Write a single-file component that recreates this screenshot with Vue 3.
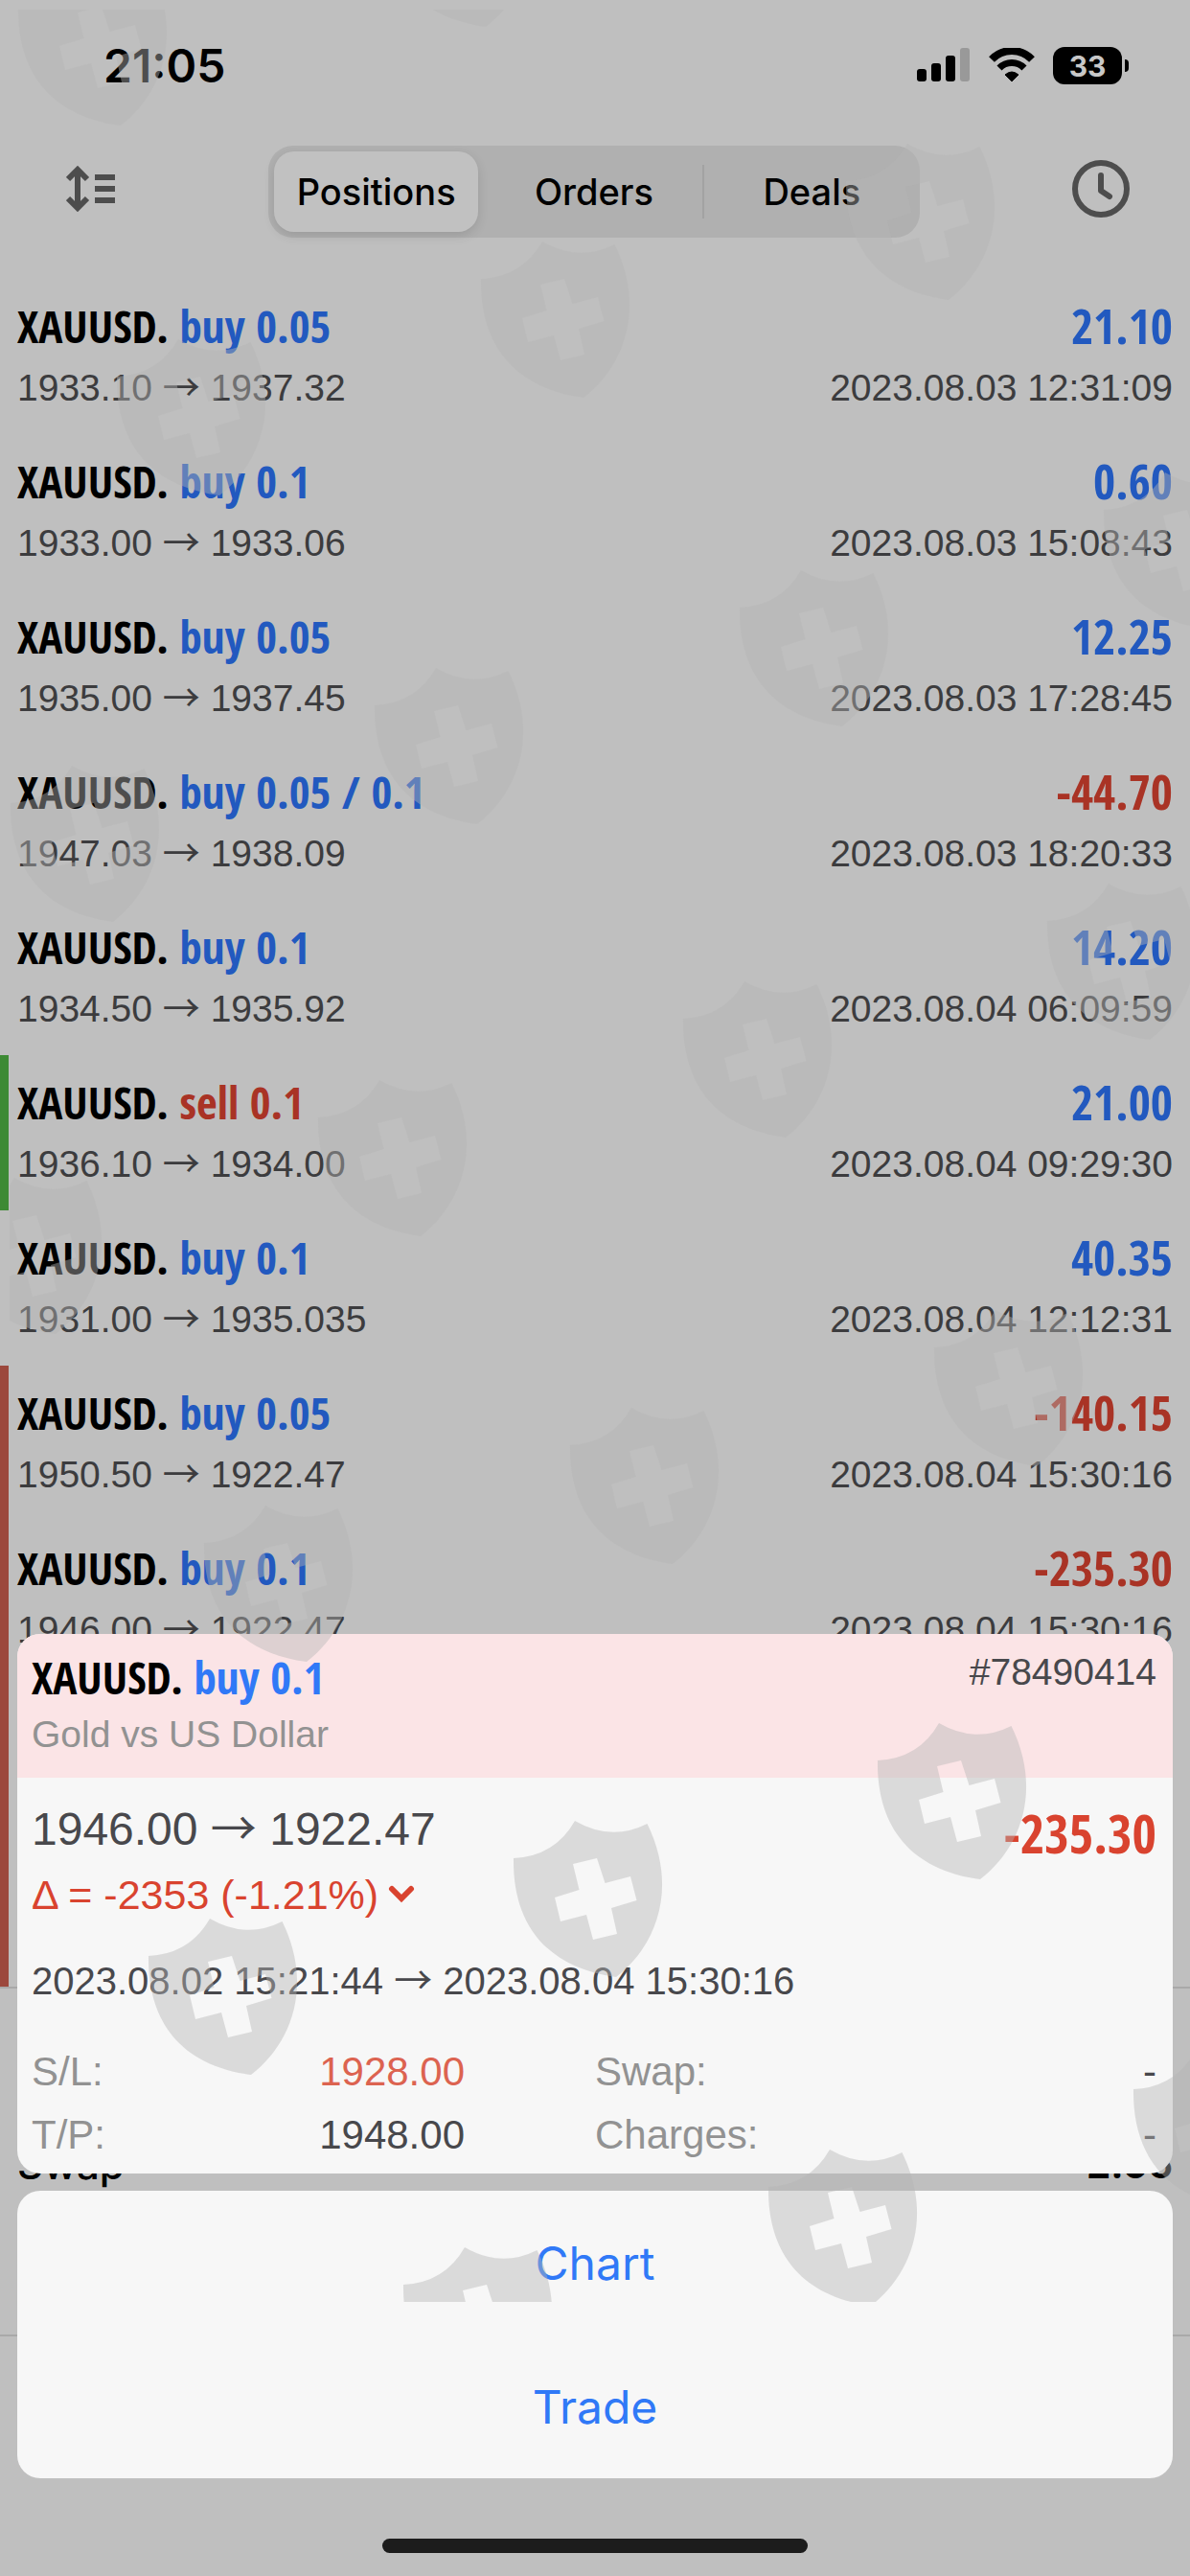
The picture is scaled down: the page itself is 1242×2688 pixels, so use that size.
<template>
    <div class="screen">
        <header class="status-bar">
            <span class="time">21:05</span>
            <div class="status-icons">
                <svg class="signal" width="56" height="36" viewBox="0 0 56 36" aria-hidden="true">
                    <rect x="0" y="22" width="10" height="13" rx="3" fill="#000" />
                    <rect x="15" y="16" width="10" height="19" rx="3" fill="#000" />
                    <rect x="30" y="8" width="10" height="27" rx="3" fill="#000" />
                    <rect x="45" y="0" width="10" height="35" rx="3" fill="#999" />
                </svg>
                <svg class="wifi" width="48" height="36" viewBox="0 0 48 36" aria-hidden="true">
                    <path d="M3 12 A29 29 0 0 1 45 12" fill="none" stroke="#000" stroke-width="8" />
                    <path d="M11 21 A18 18 0 0 1 37 21" fill="none" stroke="#000" stroke-width="7" />
                    <path d="M24 35 L17 28 Q24 22 31 28 Z" fill="#000" stroke="#000" stroke-linejoin="round" />
                </svg>
                <div class="battery"><span>33</span></div>
            </div>
        </header>

        <nav class="toolbar">
            <button class="icon-button" type="button" aria-label="Sort">
                <svg width="52" height="48" viewBox="0 0 52 48" fill="none" stroke="#4d4d4d" stroke-width="6">
                    <path d="M12 4 V44 M2 14 L12 4 L22 14 M2 34 L12 44 L22 34" />
                    <path d="M30 12 H51 M30 24 H51 M30 36 H51" />
                </svg>
            </button>
            <div class="segments">
                <button
                    v-for="tab in tabs"
                    :key="tab"
                    type="button"
                    class="segment"
                    :class="{ active: tab === activeTab }"
                    @click="activeTab = tab"
                >{{ tab }}</button>
            </div>
            <button class="icon-button" type="button" aria-label="History">
                <svg width="60" height="60" viewBox="0 0 60 60" fill="none" stroke="#4d4d4d" stroke-width="6">
                    <circle cx="30" cy="30" r="27" />
                    <path d="M30 16 V32 L39 38" stroke-linecap="round" stroke-linejoin="round" />
                </svg>
            </button>
        </nav>

        <ul class="positions">
            <li v-for="(p, i) in positions" :key="i" class="position" :class="p.mark">
                <div class="line title">
                    <span>XAUUSD. <span :class="p.side">{{ p.side }} {{ p.volume }}</span></span>
                    <span class="amount" :class="p.profit.startsWith('-') ? 'loss' : 'gain'">{{ p.profit }}</span>
                </div>
                <div class="line detail">
                    <span>{{ p.open }} <span class="arrow">→</span> {{ p.current }}</span>
                    <span>{{ p.time }}</span>
                </div>
            </li>
        </ul>

        <section class="summary">
            <span>Swap</span>
            <span class="summary-value">2.05</span>
        </section>

        <div class="sheet">
            <section class="card">
                <div class="card-head">
                    <div>
                        <div class="title">XAUUSD. <span class="buy">buy 0.1</span></div>
                        <div class="muted">Gold vs US Dollar</div>
                    </div>
                    <span class="ticket">#78490414</span>
                </div>
                <div class="card-body">
                    <div class="line">
                        <span class="price">1946.00 <span class="arrow">→</span> 1922.47</span>
                        <span class="profit">-235.30</span>
                    </div>
                    <div class="delta">
                        <span>Δ = -2353 (-1.21%)</span>
                        <svg width="28" height="20" viewBox="0 0 28 20" fill="none" stroke="#d9432f" stroke-width="6">
                            <path d="M4 4 L14 14 L24 4" stroke-linecap="round" />
                        </svg>
                    </div>
                    <div class="dates">2023.08.02 15:21:44 <span class="arrow">→</span> 2023.08.04 15:30:16</div>
                    <dl class="facts">
                        <div class="fact"><dt>S/L:</dt><dd class="stop">1928.00</dd></div>
                        <div class="fact"><dt>Swap:</dt><dd>-</dd></div>
                        <div class="fact"><dt>T/P:</dt><dd>1948.00</dd></div>
                        <div class="fact"><dt>Charges:</dt><dd>-</dd></div>
                    </dl>
                </div>
            </section>
            <section class="card actions">
                <button type="button">Chart</button>
                <button type="button">Trade</button>
            </section>
            <div class="home-indicator"></div>
        </div>

        <svg class="watermark" viewBox="0 0 1242 2688" preserveAspectRatio="xMidYMin meet" aria-hidden="true">
            <defs>
                <clipPath id="mark-area"><rect x="10" y="10" width="1232" height="2392" /></clipPath>
            </defs>
            <g clip-path="url(#mark-area)">
                <path v-for="(s, i) in shields" :key="i" :d="shieldPath" :transform="`translate(${s[0]} ${s[1]})`" />
            </g>
        </svg>
    </div>
</template>

<script setup>
import { ref } from 'vue';

const tabs = ['Positions', 'Orders', 'Deals'];
const activeTab = ref('Positions');

const positions = [
    { side: 'buy', volume: '0.05', profit: '21.10', open: '1933.10', current: '1937.32', time: '2023.08.03 12:31:09' },
    { side: 'buy', volume: '0.1', profit: '0.60', open: '1933.00', current: '1933.06', time: '2023.08.03 15:08:43' },
    { side: 'buy', volume: '0.05', profit: '12.25', open: '1935.00', current: '1937.45', time: '2023.08.03 17:28:45' },
    { side: 'buy', volume: '0.05 / 0.1', profit: '-44.70', open: '1947.03', current: '1938.09', time: '2023.08.03 18:20:33' },
    { side: 'buy', volume: '0.1', profit: '14.20', open: '1934.50', current: '1935.92', time: '2023.08.04 06:09:59' },
    { side: 'sell', volume: '0.1', profit: '21.00', open: '1936.10', current: '1934.00', time: '2023.08.04 09:29:30', mark: 'near-profit' },
    { side: 'buy', volume: '0.1', profit: '40.35', open: '1931.00', current: '1935.035', time: '2023.08.04 12:12:31' },
    { side: 'buy', volume: '0.05', profit: '-140.15', open: '1950.50', current: '1922.47', time: '2023.08.04 15:30:16', mark: 'near-stop' },
    { side: 'buy', volume: '0.1', profit: '-235.30', open: '1946.00', current: '1922.47', time: '2023.08.04 15:30:16', mark: 'near-stop' }
];

// shield outline with the cross cut out by the even-odd rule
const shieldPath = 'M64 0 Q102 22 139.500 3 C172 69 150 130 107 163 C27 152 -1 100 0 39 Q43 37 64 0 Z'
    + ' M62 45 L87 39 L95.500 65 L122 58 L128.500 83 L102 91 L108 118 L83 124 L76 98 L49 105 L43 80 L68.500 72 Z';

const shields = [
    [19, -32], [400, -135],
    [883, 150], [502, 252], [122, 354],
    [1152, 493], [772, 595], [391, 697], [11, 799],
    [1093, 922], [713, 1024], [332, 1127], [-49, 1229],
    [975, 1367], [595, 1469], [213, 1571],
    [916, 1798], [536, 1900], [155, 2002],
    [1183, 2141], [802, 2243], [421, 2345]
];
</script>

<style>
body {
    background: #bfbfbf;
}
</style>

<style scoped>
.screen {
    position: relative;
    min-height: 100vh;
    overflow: hidden;
    background: #bfbfbf;
    color: #3c3c3e;
    font-family: "Liberation Sans", Arial, sans-serif;
    font-size: 39px;
}
button {
    border: 0;
    padding: 0;
    background: none;
    cursor: pointer;
}
svg {
    display: block;
}
.status-bar {
    display: flex;
    justify-content: space-between;
    align-items: center;
    height: 136px;
    padding: 0 71px 0 108px;
    box-sizing: border-box;
    color: #000;
    font-family: Inter, sans-serif;
}
.time {
    font-size: 48px;
    font-weight: 600;
}
.status-icons {
    display: flex;
    align-items: center;
    gap: 19px;
}
.battery {
    position: relative;
    width: 72px;
    height: 39px;
    border-radius: 12px;
    background: #000;
    color: #c8c8c8;
    font-size: 30px;
    font-weight: 700;
    line-height: 40px;
    text-align: center;
}
.battery::after {
    content: "";
    position: absolute;
    left: 75px;
    top: 13px;
    width: 4px;
    height: 13px;
    border-radius: 0 6px 6px 0;
    background: #000;
}
.toolbar {
    display: flex;
    justify-content: space-between;
    align-items: center;
    height: 128px;
    padding: 0 63px 0 69px;
}
.icon-button {
    margin-bottom: 6px;
}
.segments {
    display: flex;
    gap: 14px;
    width: 680px;
    height: 96px;
    padding: 6px;
    box-sizing: border-box;
    border-radius: 26px;
    background: #b0b0b0;
}
.segment {
    position: relative;
    flex: 1;
    border-radius: 21px;
    color: #000;
    font-family: Inter, sans-serif;
    font-size: 38px;
    font-weight: 500;
}
.segment.active {
    background: #c1c1c1;
    box-shadow: 0 4px 12px rgba(0, 0, 0, 0.12);
}
.segment:last-child::before {
    content: "";
    position: absolute;
    left: -8px;
    top: 14px;
    bottom: 14px;
    width: 2px;
    background: #a2a2a2;
}
.positions {
    margin: 0;
    padding: 27px 0 0;
    list-style: none;
}
.position {
    height: 162px;
    padding: 18px 18px 0;
    box-sizing: border-box;
}
.near-profit {
    box-shadow: inset 9px 0 #3d8a34;
}
.near-stop {
    box-shadow: inset 9px 0 #9c483d;
}
.position:last-child {
    height: 486px;
}
.line {
    display: flex;
    justify-content: space-between;
}
.title {
    color: #000;
    font-family: "Open Sans Condensed", "Roboto Condensed", sans-serif;
    font-size: 47px;
    font-weight: 700;
    line-height: 62px;
}
.amount {
    font-size: 50px;
}
.detail {
    line-height: 68px;
}
.arrow {
    font-family: "Noto Sans CJK SC", sans-serif;
    line-height: 1;
}
.position .buy,
.gain {
    color: #2259bf;
}
.sell,
.loss {
    color: #a93325;
}
.summary {
    display: flex;
    justify-content: space-between;
    height: 365px;
    padding: 158px 18px 0;
    box-sizing: border-box;
    border-top: 2px solid #a9a9a9;
    border-bottom: 2px solid #a9a9a9;
    color: #000;
    font-family: Inter, sans-serif;
    font-size: 42px;
    font-weight: 500;
}
.summary-value {
    font-size: 40px;
    font-weight: 700;
    line-height: 51px;
}
.sheet {
    position: absolute;
    left: 18px;
    right: 18px;
    bottom: 24px;
    display: flex;
    flex-direction: column;
    gap: 18px;
    color: #48484c;
}
.card {
    border-radius: 24px;
    background: #f7f7f7;
    overflow: hidden;
}
.card-head {
    display: flex;
    justify-content: space-between;
    height: 150px;
    padding: 16px 17px 0 15px;
    box-sizing: border-box;
    background: #fbe4e6;
}
.card-head .title {
    line-height: 58px;
}
.buy {
    color: #3079f7;
}
.muted,
dt {
    color: #929292;
}
.muted {
    line-height: 62px;
}
.ticket {
    line-height: 48px;
}
.card-body {
    padding: 24px 17px 7px 15px;
}
.price {
    font-size: 48px;
    line-height: 60px;
}
.profit {
    font-family: "Open Sans Condensed", "Roboto Condensed", sans-serif;
    font-size: 55px;
    font-weight: 700;
    line-height: 68px;
    color: #d9432f;
}
.delta {
    display: flex;
    align-items: center;
    gap: 10px;
    color: #d9432f;
    font-size: 43px;
    line-height: 60px;
}
.dates {
    padding: 30px 0 32px;
    font-size: 40px;
    line-height: 60px;
}
.facts {
    display: grid;
    grid-template-columns: 452px 1fr;
    column-gap: 136px;
    margin: 0;
    font-size: 42px;
    line-height: 66px;
}
.fact {
    display: flex;
    justify-content: space-between;
}
dd {
    margin: 0;
}
.stop {
    color: #dc6350;
}
.actions {
    display: flex;
    flex-direction: column;
}
.actions button {
    height: 150px;
    color: #3079f7;
    font-family: Inter, sans-serif;
    font-size: 48px;
}
.home-indicator {
    width: 444px;
    height: 15px;
    margin: 45px auto 0;
    border-radius: 8px;
    background: #1c1c1c;
}
.watermark {
    position: absolute;
    top: 0;
    left: 0;
    width: 100%;
    pointer-events: none;
    fill: rgba(180, 180, 180, 0.43);
    fill-rule: evenodd;
}
</style>
